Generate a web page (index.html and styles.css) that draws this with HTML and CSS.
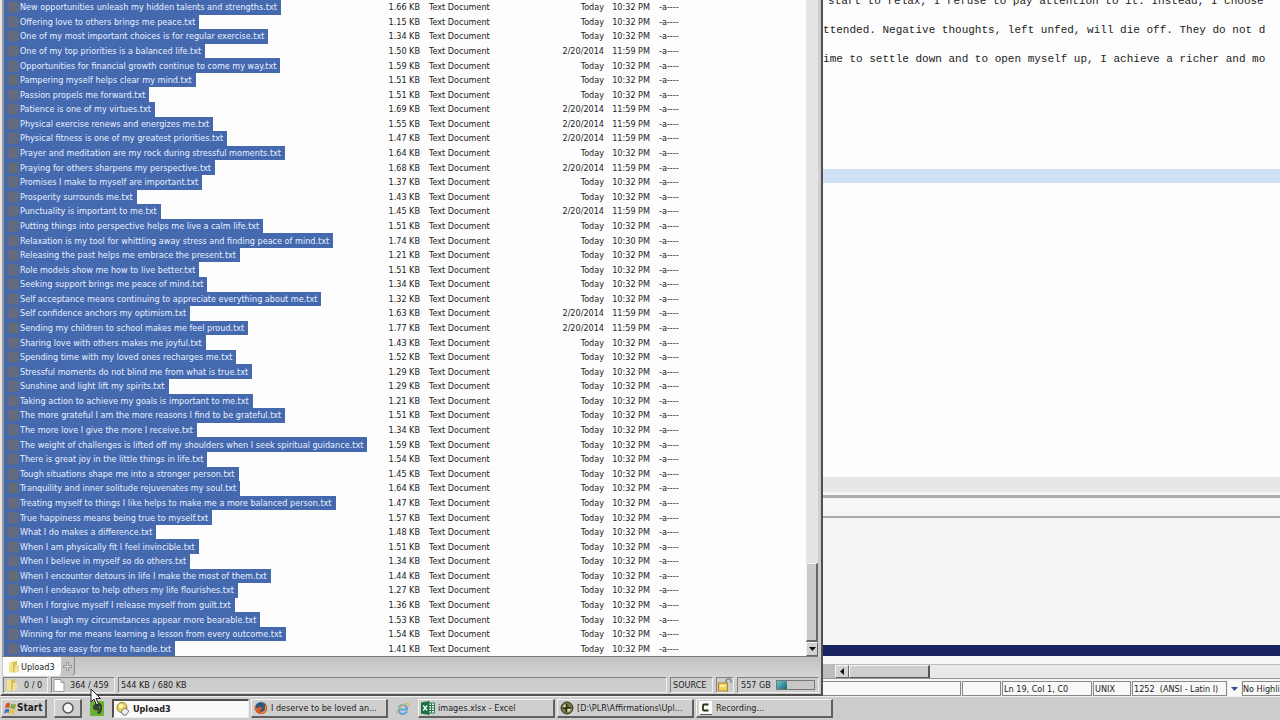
FILE: index.html
```html
<!DOCTYPE html>
<html lang="en">
<head>
<meta charset="utf-8">
<title>Upload3</title>
<link rel="stylesheet" href="styles.css">
</head>
<body>
<main class="desktop">
  <section class="manager">
    <div class="listing">
      <table class="files"><tbody id="files"></tbody></table>
      <div class="vscroll">
        <div class="vthumb"></div>
        <button class="scroll-btn" aria-label="Scroll down"><svg width="7" height="4" viewBox="0 0 7 4"><path d="M0 0h7L3.500 4z" fill="#111"/></svg></button>
      </div>
    </div>
    <div class="tabs">
      <button class="tab"><svg width="12" height="14" viewBox="0 0 12 14"><path d="M1 3l4-2 1 11-5 1z" fill="#f3e48c"/><path d="M5 2l4-1v10l-4 2z" fill="#d9bf4b"/><path d="M7 5h4v7l-5 1z" fill="#efe0a0"/></svg>Upload3</button>
      <button class="tab-add" aria-label="New tab"><svg width="9" height="9" viewBox="0 0 9 9"><path d="M3 0h3v3h3v3H6v3H3V6H0V3h3z" fill="#999"/><path d="M4 1h1v3h3v1H5v3H4V5H1V4h3z" fill="#ddd"/></svg></button>
    </div>
    <footer class="status">
      <div class="cell folders"><svg width="12" height="14" viewBox="0 0 12 14"><path d="M1 3l4-2 1 11-5 1z" fill="#f3e48c"/><path d="M5 2l4-1v10l-4 2z" fill="#d9bf4b"/><path d="M7 5h4v7l-5 1z" fill="#efe0a0"/></svg><span>0 / 0</span></div>
      <div class="cell count"><svg width="12" height="13" viewBox="0 0 12 13"><path d="M1 .5h7l3 3v9H1z" fill="#fff" stroke="#999"/><path d="M8 .5v3h3" fill="none" stroke="#999"/></svg><span>364 / 459</span></div>
      <div class="cell bytes">544 KB / 680 KB</div>
      <div class="cell source">SOURCE</div>
      <div class="cell lock"><svg width="16" height="14" viewBox="0 0 16 14"><path d="M9 7V3q0-2 2.500-2T14 3v2" fill="none" stroke="#888" stroke-width="1.500"/><rect x="1.500" y="5" width="9" height="8" fill="#f0d15a" stroke="#a8842a"/><path d="M3 7h5v2H3z" fill="#fbeeb0"/></svg></div>
      <div class="cell disk"><span>557 GB</span><span class="gauge"><span class="used"></span></span></div>
    </footer>
  </section>
  <section class="editor">
    <div class="page">
      <p class="line first">start to relax, I refuse to pay attention to it. Instead, I choose</p>
      <p class="line">ttended. Negative thoughts, left unfed, will die off. They do not d</p>
      <p class="line">ime to settle down and to open myself up, I achieve a richer and mo</p>
      <div class="current"></div>
    </div>
    <div class="hbar"></div>
    <div class="ruler"></div>
    <div class="output"></div>
    <div class="selected"></div>
    <div class="hscroll">
      <button class="scroll-btn" aria-label="Scroll left"><svg width="4" height="7" viewBox="0 0 4 7"><path d="M4 0v7L0 3.500z" fill="#111"/></svg></button>
      <div class="hthumb"></div>
    </div>
    <footer class="info">
      <span class="box message"></span>
      <span class="box blank"></span>
      <span class="box position">Ln 19, Col 1, C0</span>
      <span class="box eol">UNIX</span>
      <span class="box encoding">1252&nbsp; (ANSI - Latin I)</span>
      <button class="drop" aria-label="Choose encoding"><svg width="7" height="4" viewBox="0 0 7 4"><path d="M0 0h7L3.500 4z" fill="#33508f"/></svg></button>
      <span class="box highlight">No Highli</span>
    </footer>
  </section>
</main>
<nav class="taskbar">
  <button class="start"><svg width="13" height="13" viewBox="0 0 13 13"><path d="M2 2q2-2 4-.5L5.500 6Q3.500 5 1 6.500z" fill="#d9532c"/><path d="M7 1.500q2 1.500 5 .5l-1 4.500q-2 1-4.500-.5z" fill="#7cab3c"/><path d="M1 7.500q2-1.500 4.300-.4L4.700 11Q3 10 0 11.500z" fill="#4173b8"/><path d="M6.300 7.200q2 1.300 4.500.4L10 12q-2.500.8-4.400-.5z" fill="#ecc03f"/></svg>Start</button>
  <button class="orb" aria-label="Launcher"><svg width="14" height="14" viewBox="0 0 14 14"><circle cx="7" cy="7" r="5" fill="#f3f3f3" stroke="#555" stroke-width="1.500"/></svg></button>
  <button class="quick notes" aria-label="Notes"><svg width="14" height="15" viewBox="0 0 14 15"><rect width="14" height="15" rx="1" fill="#67b437"/><path d="M3 5l3-3h3q3 0 3 4 0 7-3 7-2 0-2-2 0-1 2-1V9Q7 10 6 9 3 10 3 5z" fill="#384334"/><path d="M9 6h1v1H9z" fill="#bcd7a9"/></svg></button>
  <button class="task active"><svg width="14" height="14" viewBox="0 0 14 14"><circle cx="6" cy="5.500" r="5" fill="#eed65a" stroke="#97812c"/><circle cx="5" cy="4" r="2" fill="#fff6c0"/><path d="M5 9l4-3 4 3-3 4H7z" fill="#eee" stroke="#777"/></svg>Upload3</button>
  <button class="task"><svg width="14" height="14" viewBox="0 0 14 14"><circle cx="7" cy="7" r="6" fill="#34557e"/><path d="M1 4q0 3 3 3 2-2 4 0-1 3-3 2 2 3 5 1 3-3 1-8 3 3 2 7-2 4-6 4-6-1-6.500-6z" fill="#dd5b25"/><path d="M11 3q2 3 0 7-2 3-5 2 4-1 5-4z" fill="#f0a53a"/></svg>I deserve to be loved an...</button>
  <button class="quick" aria-label="Internet Explorer"><svg width="14" height="14" viewBox="0 0 14 14"><path d="M11 9.500Q9.500 12 7 12 3 12 3 7.500T7 3t4 4.500H4" fill="none" stroke="#58a6d8" stroke-width="2"/><path d="M1 12Q-.5 9 5 4.500T13 2q.5 1-1 3" fill="none" stroke="#dcb64d" stroke-width="1.200"/></svg></button>
  <button class="task"><svg width="14" height="14" viewBox="0 0 14 14"><path d="M7 2h6.500v10H7z" fill="#fff" stroke="#25784a"/><path d="M8 4.500h5M8 7h5M8 9.500h5M10.500 2v10" stroke="#25784a"/><path d="M0 1.500L8.500 0v14L0 12.500z" fill="#1c7144"/><path d="M2.200 4.500l4 5M6.200 4.500l-4 5" stroke="#fff" stroke-width="1.300"/></svg>images.xlsx - Excel</button>
  <button class="task"><svg width="14" height="14" viewBox="0 0 14 14"><circle cx="7" cy="7" r="6" fill="#77733c" stroke="#333"/><path d="M3 7q0-4 4-4v4zM7 7h4q0 4-4 4z" fill="#e9e2a2"/><path d="M6.500 3v8M3 7h8" stroke="#222" stroke-width="1.500"/></svg>[D:\PLR\Affirmations\Upl...</button>
  <button class="task"><svg width="14" height="14" viewBox="0 0 14 14"><rect width="13" height="14" fill="#fafaf5"/><path d="M9.500 3.500H5q-1 0-1 1v4q0 1 1 1h4.500" fill="none" stroke="#2c351c" stroke-width="1.800"/><path d="M1 13.500h12" stroke="#555"/></svg>Recording...</button>
</nav>
<svg class="pointer" width="12" height="18" viewBox="0 0 12 18"><path d="M1 1v13l3-3 2.500 6 2-1L6 10.500h4.500z" fill="#fff" stroke="#222"/></svg>
<script src="files.js"></script>
</body>
</html>
```

FILE: styles.css
```css
* { box-sizing: border-box; }

body {
  margin: 0;
  height: 100vh;
  display: flex;
  flex-direction: column;
  overflow: hidden;
  background: #cdcdcd;
  color: #222;
  font: 9px/14px "DejaVu Sans Condensed", "DejaVu Sans", sans-serif;
}

button {
  margin: 0;
  padding: 0;
  border: 0;
  background: none;
  color: inherit;
  font: inherit;
  display: flex;
  align-items: center;
}

svg { flex: none; display: block; }

.desktop { flex: 1; min-height: 0; display: flex; }

/* File manager */
.manager {
  flex: 0 0 64.3%;
  min-width: 0;
  display: flex;
  flex-direction: column;
  border-left: 2px solid #e8e8e8;
  border-right: 2px solid #505050;
  border-bottom: 2px solid #505050;
}

.listing {
  flex: 1;
  min-height: 0;
  display: flex;
  margin-right: 3px;
  border-left: 2px solid #9a9a9a;
  border-bottom: 1px solid #777;
  background: #fdfdfd;
}

.files { flex: 1; min-width: 0; display: flex; }
.files tbody { flex: 1; display: flex; flex-direction: column; }
.files tr { flex: 1 1 0; min-height: 0; display: flex; align-items: center; white-space: nowrap; }
.files td { padding: 0; }
.files .name { width: 336px; align-self: stretch; display: flex; }
.files .label {
  display: flex;
  align-items: center;
  gap: 1px;
  padding: 0 4px 0 3px;
  background: #4469af;
  color: #e9f0ff;
}
.files .icon { width: 12px; height: 12px; border-radius: 2px; border: 1px solid #586a8c; background: #636b7c; }
.files .size { width: 80px; text-align: right; }
.files .type { width: 104px; padding-left: 9px; }
.files .date { width: 80px; text-align: right; }
.files .time { width: 46px; text-align: right; }
.files .attr { padding-left: 9px; }

.vscroll { width: 12px; display: flex; flex-direction: column; background: #e4e4e4; }
.vthumb { margin-top: auto; height: 79px; background: #cbcbcb; border: 1px solid #f4f4f4; border-right: 2px solid #666; border-bottom: 2px solid #666; }
.scroll-btn {
  width: 12px;
  height: 14px;
  justify-content: center;
  background: #d2d2d2;
  border: 1px solid #f4f4f4;
  border-right-color: #666;
  border-bottom-color: #666;
}

.tabs { height: 20px; display: flex; background: linear-gradient(#c2c2c2, #d4d4d4); }
.tab { margin: 0 0 1px 1px; padding: 0 6px 0 5px; gap: 1px; background: #fcfcfc; border-radius: 0 0 4px 2px; }
.tab-add { width: 14px; margin-bottom: 1px; justify-content: center; background: #c4c4c4; border-right: 1px solid #888; border-radius: 0 0 4px 0; }

.status { display: flex; gap: 3px; padding: 0 2px 1px 1px; }
.cell {
  height: 16px;
  display: flex;
  align-items: center;
  border: 1px solid #808080;
  border-right-color: #f0f0f0;
  border-bottom-color: #f0f0f0;
}
.folders { width: 45px; gap: 6px; padding-left: 2px; }
.count { width: 64px; gap: 5px; padding-left: 1px; }
.bytes { flex: 1; padding-left: 2px; }
.source { width: 43px; padding-left: 2px; }
.lock { width: 18px; }
.disk { width: 82px; gap: 5px; padding-left: 3px; }
.gauge { flex: 1; height: 10px; margin-right: 3px; border: 1px solid #777; background: #c8c8c8; }
.used { display: block; width: 10px; height: 8px; background: linear-gradient(135deg, #69c4cc, #146a77); }

/* Text editor */
.editor {
  flex: 1;
  min-width: 0;
  display: flex;
  flex-direction: column;
  background: #f6f6f6;
  overflow: hidden;
}

.page { flex: 1; min-height: 0; overflow: hidden; background: #fdfdfd; }
.line { margin: 0; height: 29px; font: 11px/29px "Liberation Mono", monospace; white-space: pre; }
.line.first { height: 16px; line-height: 3px; padding-left: 5px; }
.current { height: 14px; margin-top: 95px; background: #d1e1f8; }

.hbar { height: 15px; background: #e7e7e7; }
.ruler { height: 26px; border-top: 3px solid #f6f6f6; border-bottom: 2px solid #aaa; box-shadow: inset 0 3px #acacac; }
.output { height: 127px; background: #f5f5f5; }
.selected { height: 11px; background: #17225f; }

.hscroll { height: 15px; margin-top: 8px; padding-left: 12px; display: flex; background: #e9e9e9; border-top: 1px solid #bbb; border-bottom: 1px solid #999; box-shadow: inset 12px 0 #bdbdbd; }
.hscroll .scroll-btn { height: 13px; width: 14px; }
.hthumb { width: 81px; background: #cfcfcf; border: 1px solid #f4f4f4; border-right: 2px solid #555; border-bottom: 1px solid #555; }

.info { display: flex; gap: 1px; margin-top: 2px; overflow: hidden; background: #eee; }
.box { flex: none; height: 15px; padding-left: 1px; border: 1px solid #888; background: #f8f8f8; white-space: nowrap; line-height: 15px; }
.message { flex: 0 0 138px; border-left: 0; }
.blank { width: 39px; }
.position { width: 90px; }
.eol { width: 38px; }
.encoding { width: 95px; }
.drop { width: 13px; height: 15px; justify-content: center; background: #fafafa; }
.highlight { flex: 1; min-width: 0; padding-left: 0; border-right: 0; }

/* Taskbar */
.taskbar { height: 24px; display: flex; align-items: center; padding: 0 1px; border-top: 1px solid #eee; }
.start, .orb, .task {
  height: 19px;
  background: #cfcfcf;
  border: 1px solid #f2f2f2;
  border-right: 2px solid #606060;
  border-bottom: 2px solid #606060;
}
.start { width: 46px; padding-left: 2px; font-size: 10px; font-weight: bold; }
.orb { width: 28px; margin: 0 8px 0 7px; justify-content: center; }
.quick { width: 14px; margin-right: 8px; }
.task + .quick { margin-left: 6px; }
.task { flex: 0 1 137px; min-width: 0; margin-right: 2px; padding-left: 2px; gap: 3px; white-space: nowrap; overflow: hidden; }
.task.active { background: #fafafa; border: 1px solid #eee; border-left: 2px solid #505050; border-top: 2px solid #505050; font-weight: bold; }

.pointer { position: absolute; left: 90px; top: 688px; }
```

FILE: files.js
```js
const files = [
  ["New opportunities unleash my hidden talents and strengths", "1.66"],
  ["Offering love to others brings me peace", "1.15"],
  ["One of my most important choices is for regular exercise", "1.34"],
  ["One of my top priorities is a balanced life", "1.50", "2/20/2014", "11:59"],
  ["Opportunities for financial growth continue to come my way", "1.59"],
  ["Pampering myself helps clear my mind", "1.51"],
  ["Passion propels me forward", "1.51"],
  ["Patience is one of my virtues", "1.69", "2/20/2014", "11:59"],
  ["Physical exercise renews and energizes me", "1.55", "2/20/2014", "11:59"],
  ["Physical fitness is one of my greatest priorities", "1.47", "2/20/2014", "11:59"],
  ["Prayer and meditation are my rock during stressful moments", "1.64"],
  ["Praying for others sharpens my perspective", "1.68", "2/20/2014", "11:59"],
  ["Promises I make to myself are important", "1.37"],
  ["Prosperity surrounds me", "1.43"],
  ["Punctuality is important to me", "1.45", "2/20/2014", "11:59"],
  ["Putting things into perspective helps me live a calm life", "1.51"],
  ["Relaxation is my tool for whittling away stress and finding peace of mind", "1.74", "Today", "10:30"],
  ["Releasing the past helps me embrace the present", "1.21"],
  ["Role models show me how to live better", "1.51"],
  ["Seeking support brings me peace of mind", "1.34"],
  ["Self acceptance means continuing to appreciate everything about me", "1.32"],
  ["Self confidence anchors my optimism", "1.63", "2/20/2014", "11:59"],
  ["Sending my children to school makes me feel proud", "1.77", "2/20/2014", "11:59"],
  ["Sharing love with others makes me joyful", "1.43"],
  ["Spending time with my loved ones recharges me", "1.52"],
  ["Stressful moments do not blind me from what is true", "1.29"],
  ["Sunshine and light lift my spirits", "1.29"],
  ["Taking action to achieve my goals is important to me", "1.21"],
  ["The more grateful I am the more reasons I find to be grateful", "1.51"],
  ["The more love I give the more I receive", "1.34"],
  ["The weight of challenges is lifted off my shoulders when I seek spiritual guidance", "1.59"],
  ["There is great joy in the little things in life", "1.54"],
  ["Tough situations shape me into a stronger person", "1.45"],
  ["Tranquility and inner solitude rejuvenates my soul", "1.64"],
  ["Treating myself to things I like helps to make me a more balanced person", "1.47"],
  ["True happiness means being true to myself", "1.57"],
  ["What I do makes a difference", "1.48"],
  ["When I am physically fit I feel invincible", "1.51"],
  ["When I believe in myself so do others", "1.34"],
  ["When I encounter detours in life I make the most of them", "1.44"],
  ["When I endeavor to help others my life flourishes", "1.27"],
  ["When I forgive myself I release myself from guilt", "1.36"],
  ["When I laugh my circumstances appear more bearable", "1.53"],
  ["Winning for me means learning a lesson from every outcome", "1.54"],
  ["Worries are easy for me to handle", "1.41"]
];

document.getElementById("files").innerHTML = files.map(([name, size, date = "Today", time = "10:32"]) => `
  <tr>
    <td class="name"><span class="label"><span class="icon"></span>${name}.txt</span></td>
    <td class="size">${size} KB</td>
    <td class="type">Text Document</td>
    <td class="date">${date}</td>
    <td class="time">${time} PM</td>
    <td class="attr">-a----</td>
  </tr>`).join("");
```
